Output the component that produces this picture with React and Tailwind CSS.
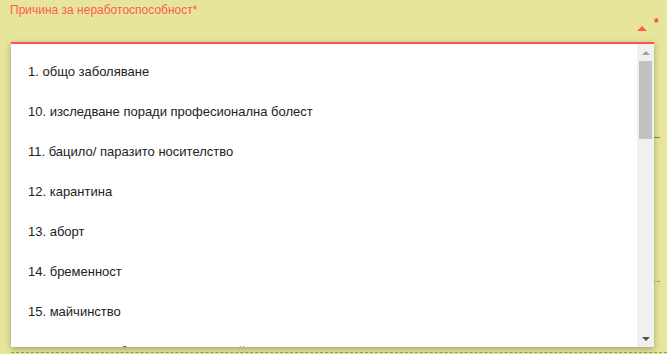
import React from "react";

const reasons = [
  "1. общо заболяване",
  "10. изследване поради професионална болест",
  "11. бацило/ паразито носителство",
  "12. карантина",
  "13. аборт",
  "14. бременност",
  "15. майчинство",
  "16. гледане на болен член от семейството",
];

const App = () => {
  return (
    <div
      className="relative w-[667px] h-[354px] overflow-hidden bg-[#e6e59b]"
      style={{ fontFamily: '"Liberation Sans", Arial, sans-serif' }}
    >
      {/* form behind the open select */}
      <div className="pl-[10px] pr-[7px] pt-[3px]">
        <div className="text-[12px] leading-[15px] text-[#ff5a52]">
          Причина за неработоспособност*
        </div>
        <div className="h-[119px]" />
        <div className="ml-auto w-[13px] border-t border-[#858565]" />
        <div className="h-[143px]" />
        <div className="ml-auto w-[13px] border-t border-dashed border-[#9a9a5a]" />
        <div className="h-[70px]" />
        <div className="ml-[1px] -mr-[7px] border-t border-dashed border-[#9a9a5a]" />
      </div>

      {/* select arrow and required mark */}
      <div className="absolute left-[637px] top-[26px] w-0 h-0 border-x-[5px] border-x-transparent border-b-[5px] border-b-[#ff5a52]" />
      <div className="absolute left-[654px] top-[17px] text-[12px] leading-[12px] font-bold text-[#ff3b30]">
        *
      </div>

      {/* open dropdown */}
      <div className="absolute left-[11px] top-[42px] w-[643px] h-[305px] bg-white border-t-2 border-[#ff5252] shadow-[0_2px_6px_rgba(0,0,0,0.3)] flex">
        <ul className="flex-1 overflow-hidden pt-[8px]">
          {reasons.map((r, idx) => (
            <li
              key={idx}
              className="h-[40px] flex items-center pl-[17px] text-[13px] text-[#222]"
            >
              {r}
            </li>
          ))}
        </ul>
        <div className="w-[17px] bg-[#f0f0f0] flex flex-col items-center">
          <div className="h-[17px] flex items-center justify-center">
            <div className="w-0 h-0 border-x-[4px] border-x-transparent border-b-[4px] border-b-[#a3a3a3]" />
          </div>
          <div className="w-[13px] h-[78px] bg-[#c1c1c1]" />
          <div className="flex-1" />
          <div className="h-[17px] flex items-center justify-center">
            <div className="w-0 h-0 border-x-[4px] border-x-transparent border-t-[4px] border-t-[#505050]" />
          </div>
        </div>
      </div>
    </div>
  );
};

export default App;
